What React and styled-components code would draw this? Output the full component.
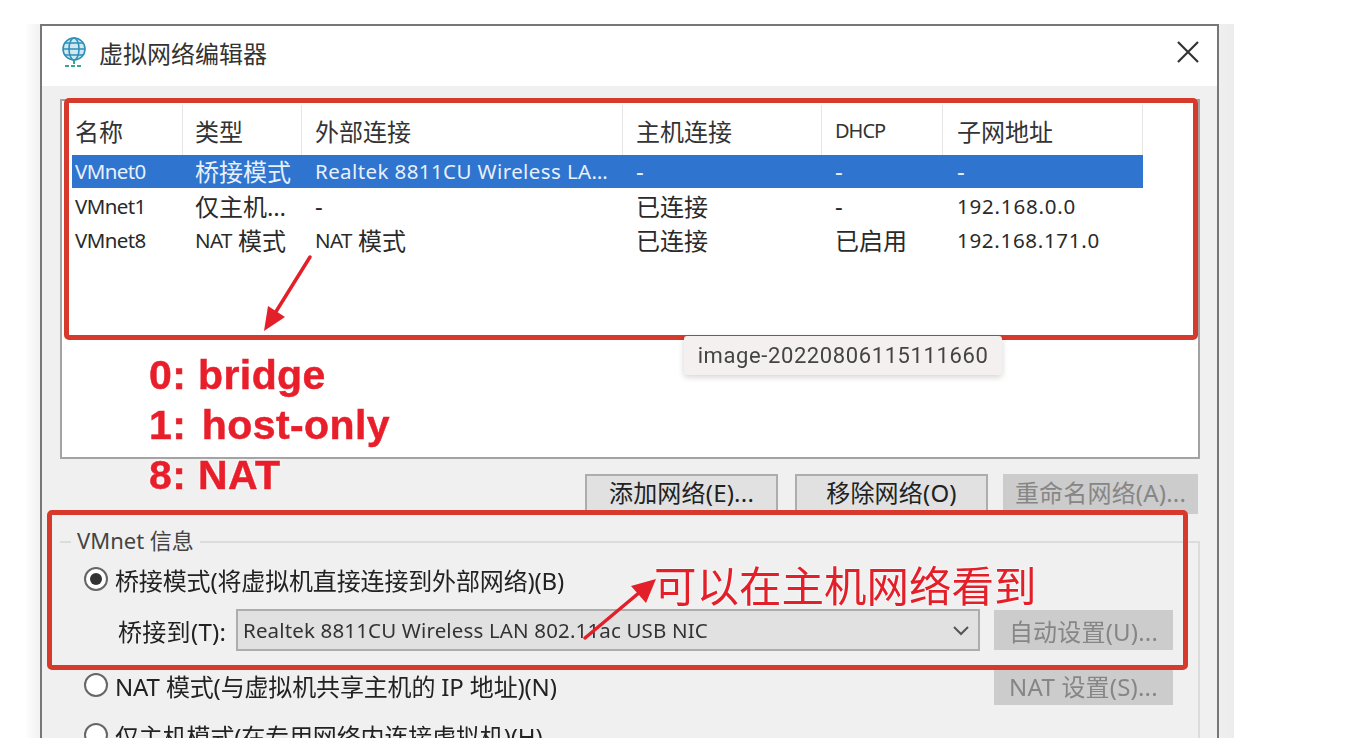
import React from "react";
import styled, { createGlobalStyle } from "styled-components";

const cjk = `"Noto Sans", "Noto Sans CJK SC", sans-serif`;

const GlobalStyle = createGlobalStyle`
    html, body {
        margin: 0;
        height: 738px;
        overflow: hidden;
        background: #fff;
    }
`;

const Page = styled.div`
    position: relative;
    width: 1370px;
    height: 738px;
    overflow: hidden;
    background: #fff;
`;

const Backdrop = styled.div`
    width: 1208px;
    height: 714px;
    margin-left: 26px;
    position: relative;
    top: 24px;
    padding: 0 15px 0 14px;
    box-sizing: border-box;
    background: linear-gradient(90deg, #fdfdfd, #f3f3f3 1%, #f1f1f1 98%, #ececec);
`;

const Dialog = styled.div`
    height: 760px;
    box-sizing: border-box;
    border: 2px solid #777;
    border-bottom: 0;
    background: #f0f0f0;
    font-family: ${cjk};
    color: #222;
    filter: blur(0.45px);
`;

const TitleBar = styled.div`
    height: 52px;
    padding: 0 17px 8px 18px;
    background: #fff;
    display: flex;
    align-items: center;
`;

const TitleText = styled.div`
    margin-left: 11px;
    font-size: 24px;
    color: #333;
    flex: 1;
`;

const Content = styled.div`
    padding: 13px 17px 0 18px;
`;

const ListBox = styled.div`
    height: 360px;
    box-sizing: border-box;
    border: 2px solid #a3a3a3;
    background: #fff;
    padding: 4px 10px 0 10px;
`;

const Grid = styled.div`
    display: grid;
    grid-template-columns: 111px 119px 321px 199px 121px 200px;
    width: 1071px;
`;

const HeadCell = styled.div`
    height: 50px;
    display: flex;
    align-items: center;
    padding-left: ${({ $pad }) => $pad}px;
    border-right: 1px solid #e6e6e6;
    font-size: ${({ $small }) => ($small ? 20 : 24)}px;
    color: #333;
    letter-spacing: ${({ $small }) => ($small ? -1 : 0)}px;
`;

const Cell = styled.div`
    height: ${({ $selected }) => ($selected ? 33 : 34)}px;
    display: flex;
    align-items: center;
    padding-left: ${({ $pad }) => $pad}px;
    padding-bottom: ${({ $selected }) => ($selected ? 2 : 0)}px;
    padding-top: ${({ $selected }) => ($selected ? 0 : 1)}px;
    box-sizing: border-box;
    white-space: nowrap;
    overflow: hidden;
    font-size: 24px;
    background: ${({ $selected }) => ($selected ? "#2f74cf" : "transparent")};
    color: ${({ $selected }) => ($selected ? "#e8f0fa" : "#2a2a2a")};
`;

const Latin = styled.span`
    font-size: 20.5px;
    letter-spacing: ${({ $sp }) => ($sp === undefined ? -0.6 : $sp)}px;
`;

const ButtonRow = styled.div`
    display: flex;
    justify-content: flex-end;
    margin-top: 15px;
    padding-right: 2px;
`;

const Button = styled.div`
    width: ${({ $w }) => $w || 193}px;
    height: ${({ $h }) => $h || 40}px;
    margin-left: ${({ $ml }) => $ml || 0}px;
    box-sizing: border-box;
    display: flex;
    align-items: center;
    justify-content: center;
    font-size: 24px;
    letter-spacing: 0.2px;
    white-space: nowrap;
    flex: none;
    background: ${({ $disabled }) => ($disabled ? "#cccccc" : "#e1e1e1")};
    border: 2px solid ${({ $disabled }) => ($disabled ? "#cccccc" : "#adadad")};
    color: ${({ $disabled }) => ($disabled ? "#868686" : "#222")};
`;

const RowButton = styled(Button)`
    padding-bottom: 6px;
`;

const Group = styled.div`
    margin-top: 27px;
    height: 240px;
    border-top: 2px solid #dcdcdc;
    border-right: 2px solid #dcdcdc;
    position: relative;
    padding: 21px 25px 0 24px;
`;

const GroupLabel = styled.div`
    position: absolute;
    top: -20px;
    left: 11px;
    padding: 0 6px;
    background: #f0f0f0;
    font-size: 22px;
    color: #444;
`;

const OptionRow = styled.div`
    display: flex;
    align-items: center;
    height: ${({ $h }) => $h}px;
    margin-top: ${({ $mt }) => $mt || 0}px;
    justify-content: ${({ $spread }) => ($spread ? "space-between" : "flex-start")};
`;

const RadioLabel = styled.label`
    display: flex;
    align-items: center;
    gap: 7px;
    font-size: 24px;
    letter-spacing: -0.15px;
    white-space: nowrap;
`;

const RadioDot = styled.span`
    width: 24px;
    height: 24px;
    box-sizing: border-box;
    flex: none;
    border-radius: 50%;
    border: 2px solid #666;
    background: #fff;
    display: flex;
    align-items: center;
    justify-content: center;

    &::after {
        content: "";
        width: 12px;
        height: 12px;
        border-radius: 50%;
        background: ${({ $on }) => ($on ? "#333" : "transparent")};
    }
`;

const BridgeLabel = styled.div`
    width: 118px;
    margin-left: 34px;
    font-size: 24px;
    letter-spacing: 0.3px;
    white-space: nowrap;
    flex: none;
`;

const Select = styled.div`
    width: 744px;
    height: 42px;
    box-sizing: border-box;
    flex: none;
    display: flex;
    align-items: center;
    justify-content: space-between;
    padding: 0 8px 0 5px;
    background: #e1e1e1;
    border: 2px solid #adadad;
    font-size: 20.5px;
    letter-spacing: 0.15px;
    color: #333;
`;

const SideButton = styled(Button)`
    margin-left: 14px;
`;

const Annotation = styled.div`
    position: absolute;
    left: 149px;
    top: ${({ $top }) => $top}px;
    font-family: "Liberation Sans", sans-serif;
    font-weight: 700;
    font-size: 41px;
    line-height: 46px;
    letter-spacing: 0.4px;
    word-spacing: ${({ $tight }) => ($tight ? -4 : 0)}px;
    white-space: pre;
    color: #e81f2b;
    -webkit-text-stroke: 0.5px #e81f2b;
    text-shadow: 0 0 3px #fff, 0 0 3px #fff;
`;

const Highlight = styled.div`
    position: absolute;
    left: ${({ $x }) => $x}px;
    top: ${({ $y }) => $y}px;
    width: ${({ $w }) => $w}px;
    height: ${({ $h }) => $h}px;
    box-sizing: border-box;
    border: 5px solid #d63a2d;
    border-radius: 5px;
    pointer-events: none;
`;

const Callout = styled.div`
    position: absolute;
    left: 654px;
    top: 557px;
    font-family: "Noto Sans CJK SC", sans-serif;
    font-size: 42.5px;
    line-height: 54px;
    white-space: nowrap;
    color: #e3202a;
    text-shadow: 0 0 2px #fff, 0 0 2px #fff;
`;

const Tooltip = styled.div`
    position: absolute;
    left: 684px;
    top: 336px;
    width: 318px;
    height: 39px;
    display: flex;
    align-items: center;
    justify-content: center;
    border-radius: 3px;
    background: #f5f0f0;
    box-shadow: 0 2px 6px rgba(0, 0, 0, 0.18);
    font-family: Roboto, sans-serif;
    font-size: 22px;
    letter-spacing: 0.6px;
    color: #444;
`;

const ArrowLayer = styled.svg`
    position: absolute;
    left: 0;
    top: 0;
    pointer-events: none;
`;

const GlobeIcon = () => (
    <svg width="28" height="32" viewBox="0 0 28 32" fill="none" stroke="#2f8fb8" strokeWidth="1.6">
        <circle cx="14" cy="13" r="11" fill="#cfe8f2" />
        <ellipse cx="14" cy="13" rx="5" ry="11" />
        <path d="M3 13h22M5 7h18M5 19h18" />
        <path d="M14 24v4M5 30h18" stroke="#37a58f" strokeWidth="2" strokeDasharray="4 2" />
    </svg>
);

const CloseIcon = () => (
    <svg width="24" height="24" viewBox="0 0 24 24" stroke="#333" strokeWidth="2.2" fill="none">
        <path d="M2 2l20 20M22 2L2 22" />
    </svg>
);

const Chevron = () => (
    <svg width="18" height="11" viewBox="0 0 18 11" stroke="#555" strokeWidth="2" fill="none">
        <path d="M2 2l7 7 7-7" />
    </svg>
);

const columns = [3, 12, 13, 13, 13, 14];

const rows = [
    { selected: true, cells: [<Latin>VMnet0</Latin>, "桥接模式", <Latin $sp={0.4}>Realtek 8811CU Wireless LA…</Latin>, "-", "-", "-"] },
    { cells: [<Latin>VMnet1</Latin>, "仅主机…", "-", "已连接", "-", <Latin $sp={0.8}>192.168.0.0</Latin>] },
    { cells: [<Latin>VMnet8</Latin>, <><Latin>NAT</Latin>&nbsp;模式</>, <><Latin>NAT</Latin>&nbsp;模式</>, "已连接", "已启用", <Latin $sp={0.7}>192.168.171.0</Latin>] },
];

const headers = ["名称", "类型", "外部连接", "主机连接", "DHCP", "子网地址"];

const App = () => {
    return (
        <Page>
            <GlobalStyle />
            <Backdrop>
                <Dialog>
                    <TitleBar>
                        <GlobeIcon />
                        <TitleText>虚拟网络编辑器</TitleText>
                        <CloseIcon />
                    </TitleBar>
                    <Content>
                        <ListBox>
                            <Grid>
                                {headers.map((h, i) => (
                                    <HeadCell key={h} $pad={columns[i]} $small={h === "DHCP"}>{h}</HeadCell>
                                ))}
                                {rows.map((row, r) =>
                                    row.cells.map((c, i) => (
                                        <Cell key={`${r}-${i}`} $pad={columns[i]} $selected={row.selected}>{c}</Cell>
                                    ))
                                )}
                            </Grid>
                        </ListBox>
                        <ButtonRow>
                            <RowButton>添加网络(E)...</RowButton>
                            <RowButton $ml={17}>移除网络(O)</RowButton>
                            <RowButton $disabled $w={195} $ml={15}>重命名网络(A)...</RowButton>
                        </ButtonRow>
                        <Group>
                            <GroupLabel>VMnet 信息</GroupLabel>
                            <OptionRow $h={30}>
                                <RadioLabel><RadioDot $on />桥接模式(将虚拟机直接连接到外部网络)(B)</RadioLabel>
                            </OptionRow>
                            <OptionRow $h={42} $mt={15}>
                                <BridgeLabel>桥接到(T):</BridgeLabel>
                                <Select>
                                    Realtek 8811CU Wireless LAN 802.11ac USB NIC
                                    <Chevron />
                                </Select>
                                <SideButton $disabled $w={179}>自动设置(U)...</SideButton>
                            </OptionRow>
                            <OptionRow $h={40} $mt={14} $spread>
                                <RadioLabel><RadioDot />NAT 模式(与虚拟机共享主机的 IP 地址)(N)</RadioLabel>
                                <SideButton $disabled $w={179}>NAT 设置(S)...</SideButton>
                            </OptionRow>
                            <OptionRow $h={30} $mt={15}>
                                <RadioLabel><RadioDot />仅主机模式(在专用网络内连接虚拟机)(H)</RadioLabel>
                            </OptionRow>
                        </Group>
                    </Content>
                </Dialog>
            </Backdrop>

            <Highlight $x={64} $y={98} $w={1134} $h={242} />
            <Highlight $x={47} $y={510} $w={1141} $h={160} />
            <Tooltip>image-20220806115111660</Tooltip>
            <Annotation $top={352}>0: bridge</Annotation>
            <Annotation $top={402} $tight>{"1:  host-only"}</Annotation>
            <Annotation $top={452}>8: NAT</Annotation>
            <Callout>可以在主机网络看到</Callout>

            <ArrowLayer width="1370" height="738" viewBox="0 0 1370 738">
                <path d="M310 257L272 318" stroke="#e3202a" strokeWidth="3.5" strokeLinecap="round" />
                <path d="M264 331L268 306L285 317Z" fill="#e3202a" />
                <path d="M585 638L640 592" stroke="#e3202a" strokeWidth="3.5" strokeLinecap="round" />
                <path d="M656 579L646 603L631 586Z" fill="#e3202a" />
            </ArrowLayer>
        </Page>
    );
};

export default App;
